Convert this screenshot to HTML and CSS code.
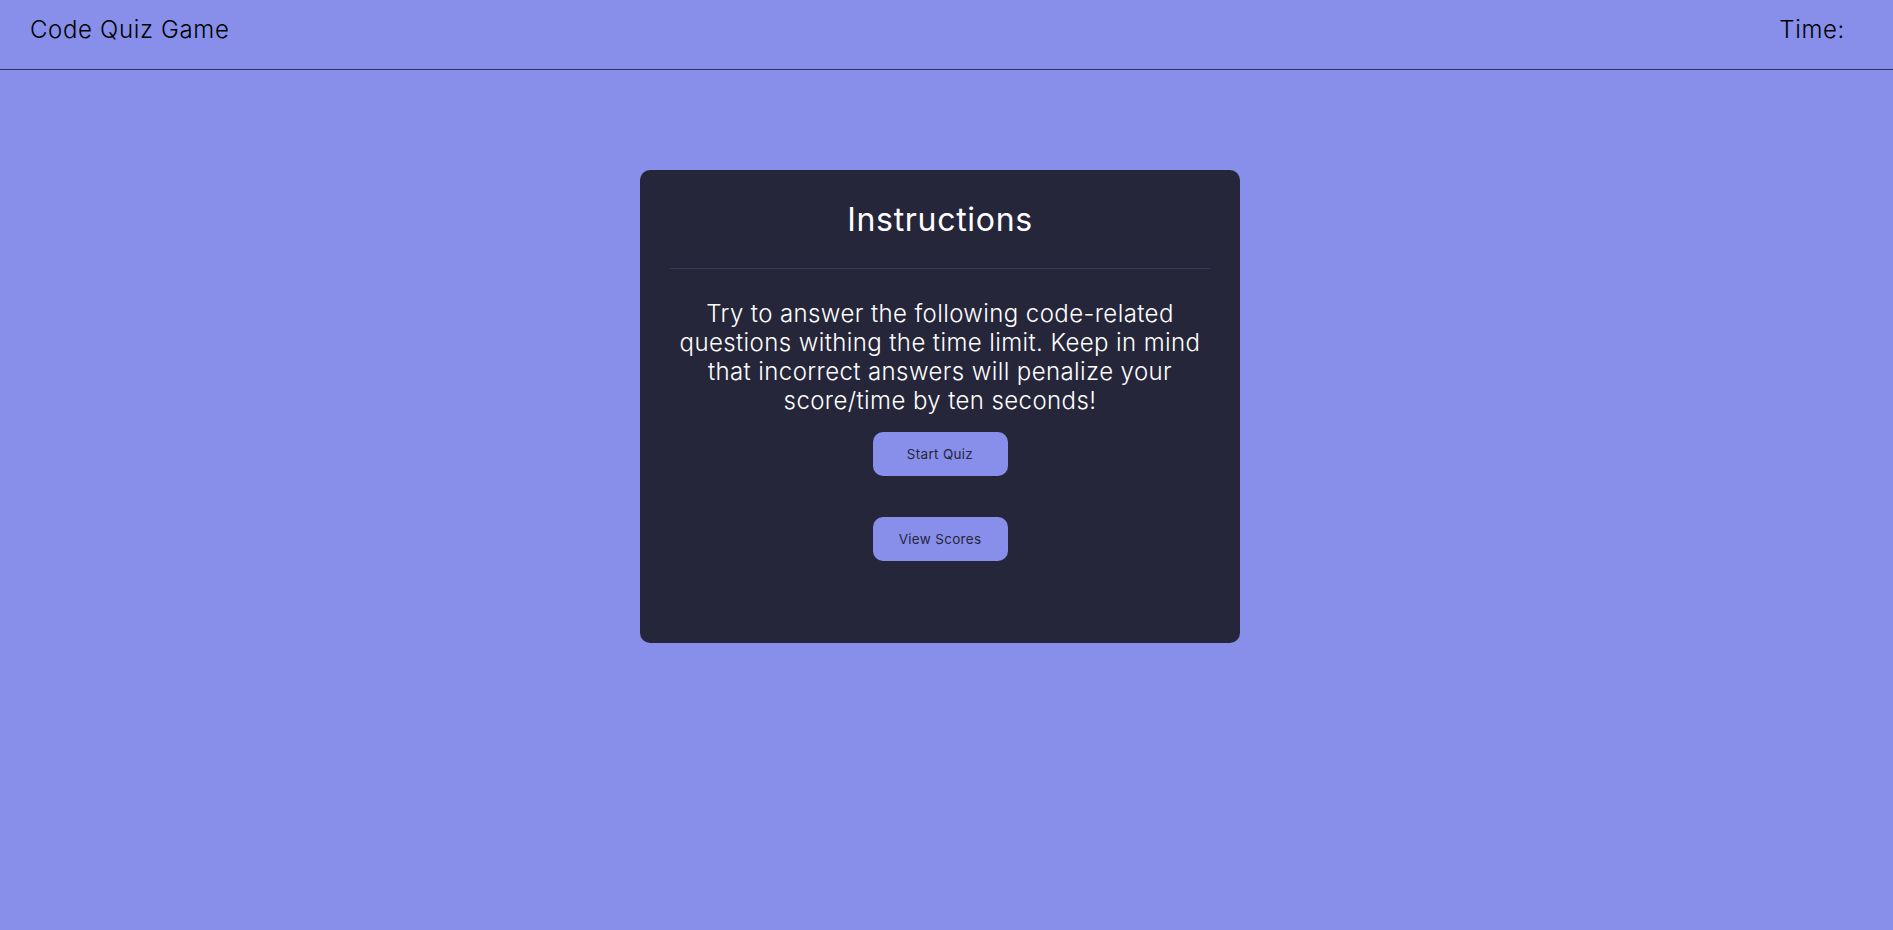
FILE: index.html
```html
<!DOCTYPE html>
<html lang="en">
<head>
<meta charset="utf-8">
<title>Code Quiz Game</title>
<link rel="stylesheet" href="styles.css">
</head>
<body>
<header class="topbar">
  <div class="brand">Code Quiz Game</div>
  <div class="timer">Time: <span class="timer-value"></span></div>
</header>
<main class="stage">
  <section class="card">
    <h1 class="card-title">Instructions</h1>
    <hr class="divider">
    <p class="card-text">Try to answer the following code-related questions withing the time limit. Keep in mind that incorrect answers will penalize your score/time by ten seconds!</p>
    <div class="actions">
      <button class="btn" type="button">Start Quiz</button>
      <button class="btn" type="button">View Scores</button>
    </div>
  </section>
</main>
</body>
</html>
```
FILE: styles.css
```css
html, body {
  margin: 0;
  padding: 0;
}
body {
  background: #878fea;
  font-family: Inter, "Open Sans", "Liberation Sans", sans-serif;
  color: #000;
  min-height: 930px;
}
.topbar {
  box-sizing: border-box;
  height: 70px;
  display: flex;
  justify-content: space-between;
  align-items: flex-start;
  padding: 15px 48px 0 30px;
  border-bottom: 1px solid #33335e;
  font-size: 24px;
  line-height: 29px;
  font-weight: 300;
  letter-spacing: 0.65px;
}
.stage {
  display: flex;
  justify-content: center;
  padding: 100px 13px 0 0;
}
.card {
  box-sizing: border-box;
  width: 600px;
  background: #26263a;
  border-radius: 10px;
  padding: 30px 30px 82px;
  text-align: center;
  color: #fff;
}
.card-title {
  margin: 0;
  font-size: 32px;
  line-height: 39px;
  font-weight: 400;
  letter-spacing: 0.7px;
}
.divider {
  border: 0;
  border-top: 1px solid #3a3a55;
  margin: 29px 0 30px;
}
.card-text {
  margin: 0;
  font-size: 24px;
  line-height: 29px;
  font-weight: 300;
  letter-spacing: 0.4px;
}
.actions {
  display: flex;
  flex-direction: column;
  align-items: center;
  gap: 41px;
  margin-top: 17px;
}
.btn {
  width: 135px;
  height: 44px;
  border: 0;
  border-radius: 10px;
  background: #878fea;
  color: #26263a;
  font-family: inherit;
  font-size: 13.5px;
  letter-spacing: 0.3px;
}
```
